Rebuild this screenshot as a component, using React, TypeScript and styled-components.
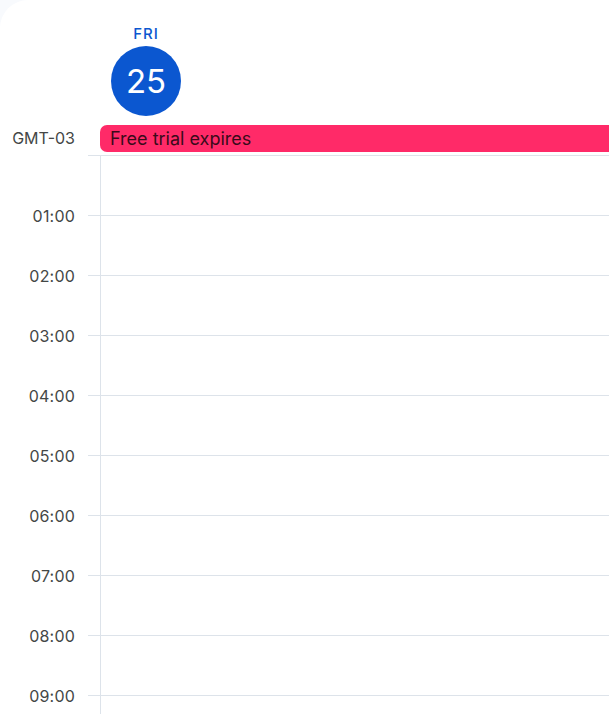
import React from "react";
import styled, { createGlobalStyle } from "styled-components";

const Global = createGlobalStyle`
  html, body { margin: 0; padding: 0; background: #f8fafd; }
  body { font-family: Inter, "Noto Sans", sans-serif; overflow: hidden; }
`;

const Panel = styled.div`
  background: #ffffff;
  border-top-left-radius: 28px;
  height: 714px;
  overflow: hidden;
`;

const Header = styled.div`
  display: grid;
  grid-template-columns: 100px 1fr;
  padding-top: 26px;
`;

const DayHead = styled.div`
  width: 92px;
  display: flex;
  flex-direction: column;
  align-items: center;
`;

const DayName = styled.div`
  color: #0b57d0;
  font-size: 15px;
  font-weight: 500;
  letter-spacing: 1px;
  line-height: 16px;
`;

const DayNum = styled.div`
  margin-top: 4px;
  width: 70px;
  height: 70px;
  border-radius: 50%;
  background: #0b57d0;
  color: #ffffff;
  font-size: 33px;
  font-weight: 400;
  display: flex;
  align-items: center;
  justify-content: center;
`;

const AllDay = styled.div`
  display: grid;
  grid-template-columns: 100px 1fr;
  margin-top: 9px;
  height: 30px;
`;

const Tz = styled.div`
  font-size: 16px;
  color: #444746;
  text-align: right;
  padding-right: 25px;
  line-height: 26px;
`;

const EventBar = styled.div`
  height: 27px;
  background: #ff2a68;
  border-radius: 7px 0 0 7px;
  color: #3a0a1a;
  font-size: 18px;
  line-height: 27px;
  padding-left: 10px;
`;

const Row = styled.div`
  display: grid;
  grid-template-columns: 88px 12px 1fr;
  height: 60px;
`;

const Label = styled.div`
  font-size: 16px;
  color: #444746;
  text-align: right;
  padding-right: 13px;
  line-height: 20px;
  margin-top: -9px;
  letter-spacing: 0.2px;
`;

const Tick = styled.div`
  border-top: 1px solid #dde3ea;
`;

const Cell = styled.div`
  border-top: 1px solid #dde3ea;
  border-left: 1px solid #dde3ea;
`;

const hours = ["", "01:00", "02:00", "03:00", "04:00", "05:00", "06:00", "07:00", "08:00", "09:00"];

export default function App() {
  return (
    <>
      <Global />
      <Panel>
        <Header>
          <div />
          <DayHead>
            <DayName>FRI</DayName>
            <DayNum>25</DayNum>
          </DayHead>
        </Header>
        <AllDay>
          <Tz>GMT-03</Tz>
          <EventBar>Free trial expires</EventBar>
        </AllDay>
        {hours.map((h, i) => (
          <Row key={i}>
            <Label>{h}</Label>
            <Tick />
            <Cell />
          </Row>
        ))}
      </Panel>
    </>
  );
}
